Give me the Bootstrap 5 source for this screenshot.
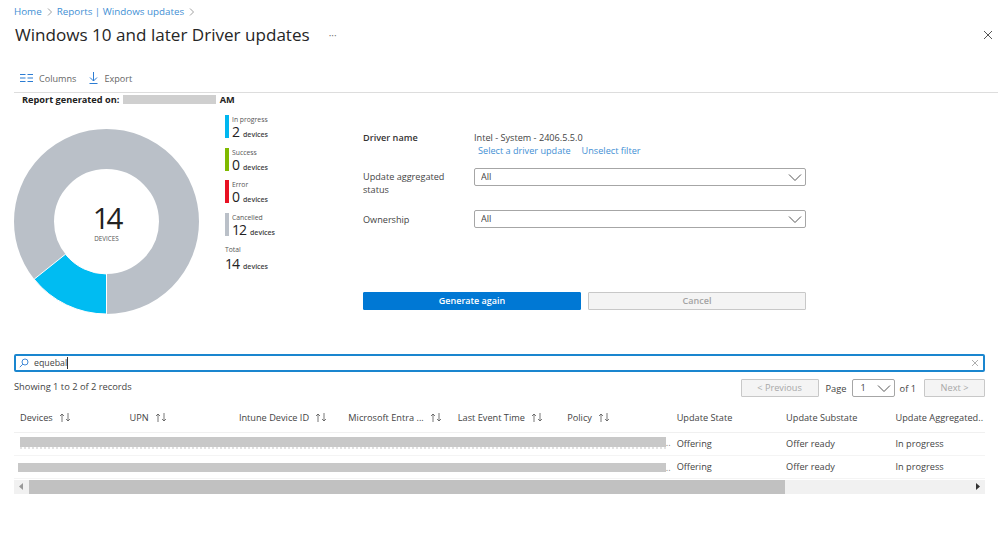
<!DOCTYPE html>
<html lang="en">
<head>
<meta charset="utf-8">
<title>Windows 10 and later Driver updates</title>
<link href="https://cdn.jsdelivr.net/npm/bootstrap@5.3.0/dist/css/bootstrap.min.css" rel="stylesheet">
<style>
html,body{height:100%}
body{font-family:"Open Sans","Noto Sans","Liberation Sans",sans-serif;font-size:9.3px;color:#444;background:#fff;overflow:hidden;line-height:13px}
a{color:#3f8fd4;text-decoration:none}
.pg{padding:0 13px 0 14px;position:relative;height:100%}
.crumbs{padding-top:5px;height:17px;font-size:9.8px;margin:0;--bs-breadcrumb-divider:none}
.crumbs .breadcrumb-item+.breadcrumb-item{padding-left:0}
.crumbs .breadcrumb-item+.breadcrumb-item::before{display:none}
.crumbs .sep{color:#888;margin:0 5px;width:5px;height:8px}
.ttl{font-size:17.08px;line-height:24px;font-weight:500;color:#262626;margin:6px 0 0 1px;font-family:"Open Sans",sans-serif}
.more{color:#777;font-size:10px;margin-left:19px;line-height:12px}
.closer{position:absolute;right:5px;top:30px;width:10px;height:10px}
.tools{height:29px;margin-top:17px;border-bottom:1px solid #ddd;margin-right:-13px;padding:0 0 0 6px;gap:13px;color:#666;font-size:9.1px}
.tools span{display:flex;align-items:center;gap:6px}
.stamp{font-weight:700;font-size:9.2px;color:#222;margin-left:8px;height:14px;line-height:14px}
.smudge{display:inline-block;width:93px;height:9px;background:#cfcfcf;vertical-align:-1px;margin:0 4px 0 1px}
.top{height:247px}
.chart{width:211px}
.chart svg{margin-top:22px;display:block}
.legend{width:138px;padding-top:8px}
.lg{height:32.7px;display:flex;gap:3.500px}
.lg i{display:block;width:3.5px;height:23px;flex:none}
.lg b,.tot b{font-weight:400;display:block;font-size:6.8px;line-height:10px;color:#555}
.lg div div,.tot div{font-size:7px;font-weight:600;line-height:14px;color:#444;white-space:nowrap}
.lg em,.tot em{font-style:normal;font-weight:400;font-size:14px;line-height:13px;letter-spacing:-1px;color:#222;margin-right:4px}
.tot{margin-top:-1px}
.tot div{margin-top:2px}
.frm{width:443px;padding-top:24px;font-size:9.15px}
.lab{width:111px;flex:none;color:#444;padding-right:20px}
.lab.strong{font-weight:600;color:#333}
.slc{height:18px;min-height:0;padding:0 24px 0 6px;font-size:9.15px;line-height:16px;border:1px solid #a6a6a6;border-radius:2px;color:#444;background-position:right 3px center;background-size:14px 9px;background-image:url("data:image/svg+xml,%3csvg xmlns='http://www.w3.org/2000/svg' viewBox='0 0 14 9'%3e%3cpath fill='none' stroke='%23555' d='M1 1.5l6 6 6-6'/%3e%3c/svg%3e")}
.btns{margin-top:64px;gap:7px}
.btn-go,.btn-no{flex:1 1 0;height:18px;padding:0;font-size:9px;font-weight:600;line-height:16px;border-radius:1px}
.btn-go{background:#0078d4;border:1px solid #0078d4;color:#fff}
.btn.btn-no:disabled{background:#f4f4f4;border:1px solid #c8c8c8;color:#a3a3a3;opacity:1}
.finder{height:18px;border:2px solid #1a86cf;border-radius:2px;padding:0 4px 0 3px;gap:5px;color:#444;font-size:8.8px}
.finder .typed{border-right:1px solid #333;line-height:12px}
.pager{height:18px;margin-top:7px}
.btn.pgb:disabled{height:18px;border:1px solid #c8c8c8;background:#f4f4f4;color:#a8a8a8;font-size:9.2px;padding:0;border-radius:1px;line-height:14px;opacity:1}
.pgsel{width:43px;height:18px;margin:0 5px;padding:0 0 0 8px;flex:none;background-position:right 3px center}
.wrap{width:971px;overflow:hidden;margin-top:7px}
.grid{table-layout:fixed;width:985px;margin:0;font-size:9.2px;--bs-table-border-color:#f0f0f0}
.grid th,.grid td{padding:0 0 0 6px;white-space:nowrap;overflow:hidden;vertical-align:middle;line-height:13px;color:#444}
.grid th{height:28px;font-weight:500}
.grid td{height:23px;border-bottom:1px solid #f4f4f4}
.grid th svg{margin-left:6px;vertical-align:-1px}
.grid td.hid{padding-left:0}
.blot{display:block;background:#c8c8c8;background-clip:padding-box;height:9.500px;flex:1}
.shade{display:flex;align-items:center;margin:-2px 0 0 6px;color:#888;line-height:10px}
.shade .blot{height:12px;border-bottom:2px dotted #e2e2e2}
.shade.alt{margin:2px 0 0 4px}
.shade.alt .blot{height:9.500px;border:0}
.bar{height:14px;background:#f1f1f1;width:971px;margin-top:1px;display:flex;align-items:center}
.bar .cap{width:15px;display:flex;justify-content:center;flex:none}
.bar .thumb{width:756px;height:100%;background:#c1c1c1}
.bar .rest{flex:1}
</style>
</head>
<body>
<div class="pg">
  <nav aria-label="breadcrumb">
    <ol class="breadcrumb crumbs align-items-center">
      <li class="breadcrumb-item"><a href="#">Home</a></li>
      <li class="d-flex align-items-center"><svg class="sep" viewBox="0 0 5 8"><path d="M1 .5L4.5 4 1 7.500" fill="none" stroke="#888" stroke-width=".8"/></svg></li>
      <li class="breadcrumb-item"><a href="#">Reports | Windows updates</a></li>
      <li class="d-flex align-items-center"><svg class="sep" viewBox="0 0 5 8"><path d="M1 .5L4.5 4 1 7.500" fill="none" stroke="#888" stroke-width=".8"/></svg></li>
    </ol>
  </nav>
  <div class="d-flex align-items-center ttl">Windows 10 and later Driver updates<span class="more">···</span></div>
  <svg class="closer" viewBox="0 0 10 10"><path d="M1 1l8 8M9 1l-8 8" stroke="#555" stroke-width="1" fill="none"/></svg>

  <div class="d-flex align-items-center tools">
    <span><svg width="13" height="8" viewBox="0 0 13 8"><path d="M0 .5h5.500M0 4h5.500M0 7.500h5.500M7.500 .5H13M7.500 4H13M7.500 7.500H13" stroke="#2b7cd3" fill="none"/></svg>Columns</span>
    <span><svg width="9" height="12" viewBox="0 0 9 12"><path d="M4.500 0v9M1 5.500l3.500 3.500L8 5.500M.5 11.500h8" stroke="#2b7cd3" fill="none"/></svg>Export</span>
  </div>
  <div class="stamp">Report generated on: <span class="smudge"></span>AM</div>

  <div class="d-flex top">
    <div class="chart">
      <svg width="185" height="185" viewBox="-92.500 -92.500 185 185" role="img" aria-label="14 devices">
        <circle r="72.500" fill="none" stroke="#bac0c8" stroke-width="40"/>
        <path d="M0 92.500A92.500 92.500 0 0 1 -72.300 57.700L-41 32.700A52.500 52.500 0 0 0 0 52.500Z" fill="#00bcf2" stroke="#fff" stroke-width="1"/>
        <text x="0" y="7.500" text-anchor="middle" font-size="29.500" font-weight="500" font-family="Open Sans, sans-serif" fill="#222" letter-spacing="-3">14</text>
        <text x="0" y="19" text-anchor="middle" font-size="6.300" font-family="Open Sans, sans-serif" fill="#555">DEVICES</text>
      </svg>
    </div>
    <div class="legend">
      <div class="lg"><i style="background:#00b7f0"></i><div><b>In progress</b><div><em>2</em>devices</div></div></div>
      <div class="lg"><i style="background:#7fba00"></i><div><b>Success</b><div><em>0</em>devices</div></div></div>
      <div class="lg"><i style="background:#e81123"></i><div><b>Error</b><div><em>0</em>devices</div></div></div>
      <div class="lg"><i style="background:#bac0c8"></i><div><b>Cancelled</b><div><em>12</em>devices</div></div></div>
      <div class="tot"><b>Total</b><div><em>14</em>devices</div></div>
    </div>
    <div class="frm">
      <div class="d-flex">
        <div class="lab strong">Driver name</div>
        <div>
          <div>Intel - System - 2406.5.5.0</div>
          <div class="d-flex" style="gap:11px;padding-left:4px"><a href="#">Select a driver update</a><a href="#">Unselect filter</a></div>
        </div>
      </div>
      <div class="d-flex" style="margin-top:11px">
        <div class="lab" style="padding-top:2px">Update aggregated status</div>
        <select class="form-select slc" aria-label="Update aggregated status"><option>All</option></select>
      </div>
      <div class="d-flex" style="margin-top:14px">
        <div class="lab" style="padding-top:3px">Ownership</div>
        <select class="form-select slc" aria-label="Ownership"><option>All</option></select>
      </div>
      <div class="d-flex btns">
        <button type="button" class="btn btn-go">Generate again</button>
        <button type="button" class="btn btn-no" disabled>Cancel</button>
      </div>
    </div>
  </div>

  <div class="d-flex align-items-center finder">
    <svg width="10" height="10" viewBox="0 0 10 10"><circle cx="6" cy="4" r="3" fill="none" stroke="#2b7cd3" stroke-width=".9"/><path d="M3.800 6.200L.8 9.200" stroke="#2b7cd3" stroke-width=".9"/></svg>
    <span class="typed">equebal</span>
    <svg class="ms-auto" width="8" height="8" viewBox="0 0 8 8"><path d="M1 1l6 6M7 1L1 7" stroke="#999" stroke-width=".8"/></svg>
  </div>

  <div class="d-flex align-items-center pager">
    <div style="margin-top:-3px">Showing 1 to 2 of 2 records</div>
    <button type="button" class="btn pgb ms-auto" style="width:78px" disabled>&lt; Previous</button>
    <span style="margin-left:7px">Page</span>
    <select class="form-select slc pgsel" aria-label="Page"><option>1</option></select>
    <span>of 1</span>
    <button type="button" class="btn pgb" style="width:61px;margin-left:8px" disabled>Next &gt;</button>
  </div>

  <div class="wrap">
  <table class="table grid">
    <thead>
      <tr>
        <th>Devices<svg width="12" height="9" viewBox="0 0 12 9"><path d="M3 9V1M1 3l2-2 2 2M9 0v8M7 6l2 2 2-2" fill="none" stroke="#555" stroke-width=".8"/></svg></th>
        <th>UPN<svg width="12" height="9" viewBox="0 0 12 9"><path d="M3 9V1M1 3l2-2 2 2M9 0v8M7 6l2 2 2-2" fill="none" stroke="#555" stroke-width=".8"/></svg></th>
        <th>Intune Device ID<svg width="12" height="9" viewBox="0 0 12 9"><path d="M3 9V1M1 3l2-2 2 2M9 0v8M7 6l2 2 2-2" fill="none" stroke="#555" stroke-width=".8"/></svg></th>
        <th>Microsoft Entra ...<svg width="12" height="9" viewBox="0 0 12 9"><path d="M3 9V1M1 3l2-2 2 2M9 0v8M7 6l2 2 2-2" fill="none" stroke="#555" stroke-width=".8"/></svg></th>
        <th>Last Event Time<svg width="12" height="9" viewBox="0 0 12 9"><path d="M3 9V1M1 3l2-2 2 2M9 0v8M7 6l2 2 2-2" fill="none" stroke="#555" stroke-width=".8"/></svg></th>
        <th>Policy<svg width="12" height="9" viewBox="0 0 12 9"><path d="M3 9V1M1 3l2-2 2 2M9 0v8M7 6l2 2 2-2" fill="none" stroke="#555" stroke-width=".8"/></svg></th>
        <th>Update State</th>
        <th>Update Substate</th>
        <th>Update Aggregated..</th>
      </tr>
    </thead>
    <tbody>
      <tr><td class="hid" colspan="6"><div class="shade"><span class="blot"></span>..</div></td><td>Offering</td><td>Offer ready</td><td>In progress</td></tr>
      <tr><td class="hid" colspan="6"><div class="shade alt"><span class="blot"></span>..</div></td><td>Offering</td><td>Offer ready</td><td>In progress</td></tr>
    </tbody>
  </table>
  </div>
  <div class="bar">
    <div class="cap"><svg width="5" height="7" viewBox="0 0 5 7"><path d="M4 0v7L0 3.500z" fill="#999"/></svg></div>
    <div class="thumb"></div>
    <div class="rest"></div>
    <div class="cap"><svg width="5" height="7" viewBox="0 0 5 7"><path d="M1 0v7l4-3.500z" fill="#333"/></svg></div>
  </div>
</div>
<script src="https://cdn.jsdelivr.net/npm/bootstrap@5.3.0/dist/js/bootstrap.bundle.min.js"></script>
</body>
</html>
